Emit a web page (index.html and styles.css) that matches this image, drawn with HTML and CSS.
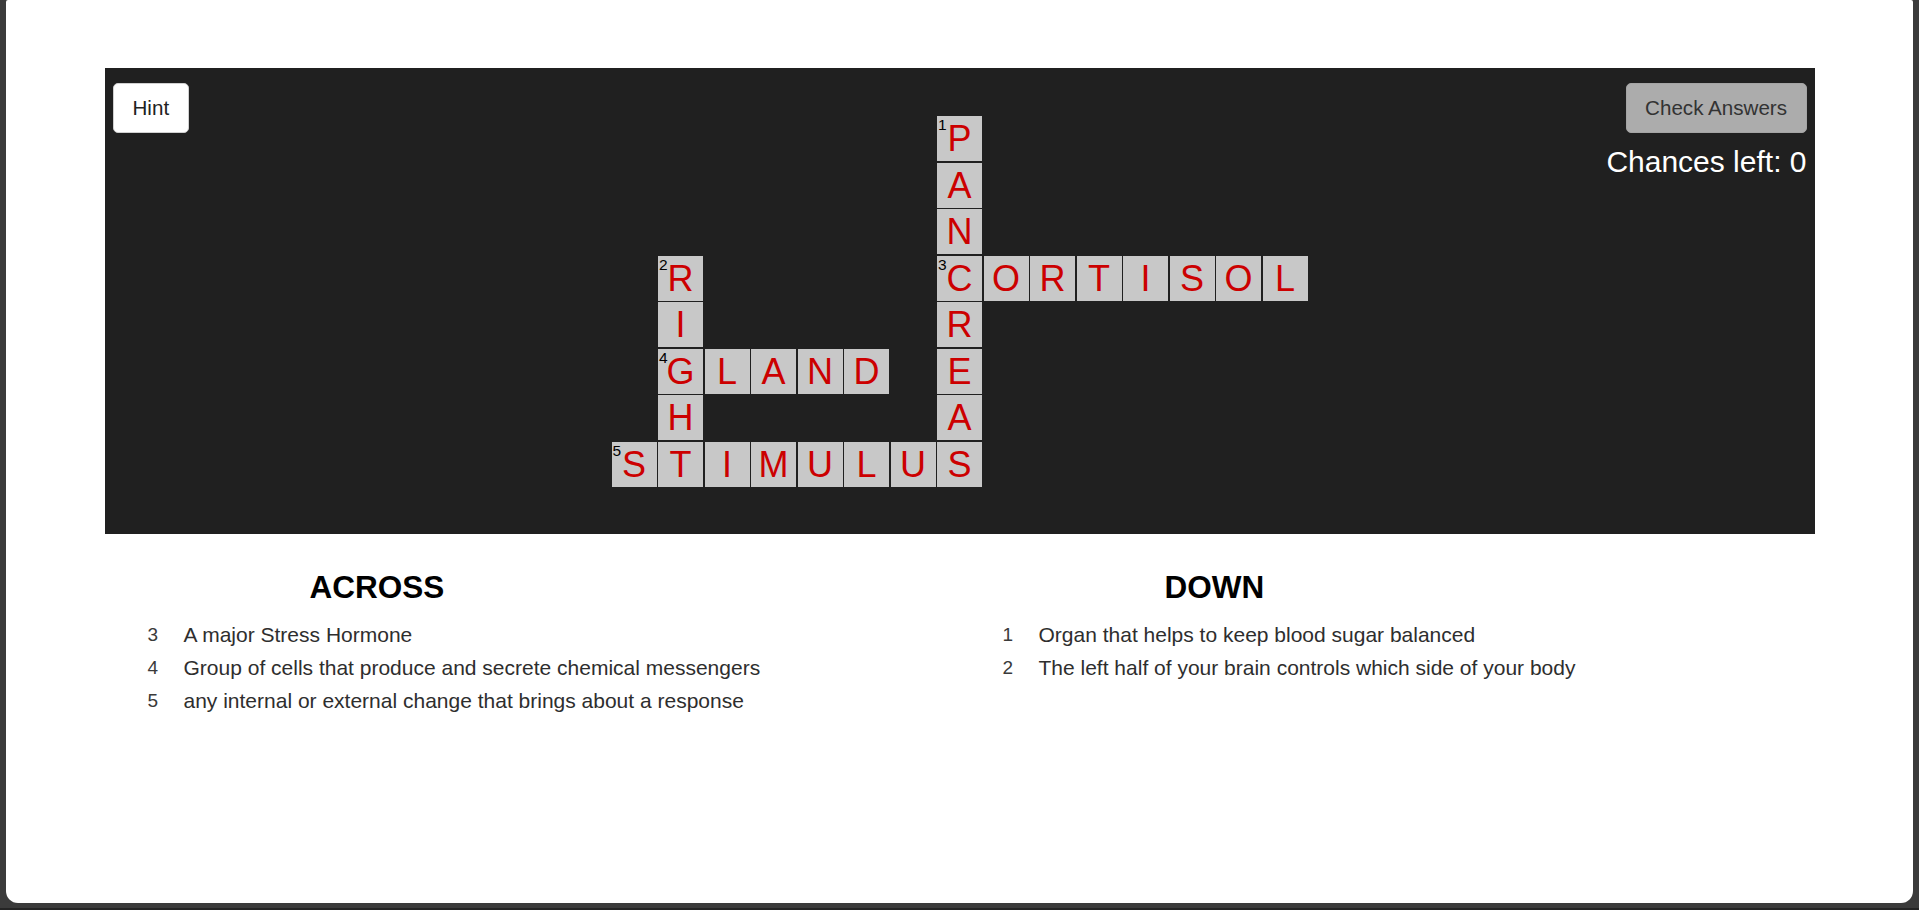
FILE: index.html
```html
<!DOCTYPE html>
<html lang="en">
<head>
<meta charset="utf-8">
<title>Crossword</title>
<link rel="stylesheet" href="styles.css">
</head>
<body>
<div class="frame">
  <main class="window">
    <section class="board">
      <button class="btn btn-hint" type="button">Hint</button>
      <div class="status">
        <button class="btn btn-check" type="button">Check Answers</button>
        <div class="chances">Chances left: 0</div>
      </div>
      <div class="grid">
        <!-- PANCREAS (down, col 8) -->
        <div class="cell" style="grid-area:1/8"><span class="num">1</span>P</div>
        <div class="cell" style="grid-area:2/8">A</div>
        <div class="cell" style="grid-area:3/8">N</div>
        <div class="cell" style="grid-area:4/8"><span class="num">3</span>C</div>
        <div class="cell" style="grid-area:5/8">R</div>
        <div class="cell" style="grid-area:6/8">E</div>
        <div class="cell" style="grid-area:7/8">A</div>
        <div class="cell" style="grid-area:8/8">S</div>
        <!-- CORTISOL (across, row 4) -->
        <div class="cell" style="grid-area:4/9">O</div>
        <div class="cell" style="grid-area:4/10">R</div>
        <div class="cell" style="grid-area:4/11">T</div>
        <div class="cell" style="grid-area:4/12">I</div>
        <div class="cell" style="grid-area:4/13">S</div>
        <div class="cell" style="grid-area:4/14">O</div>
        <div class="cell" style="grid-area:4/15">L</div>
        <!-- RIGHT (down, col 2) -->
        <div class="cell" style="grid-area:4/2"><span class="num">2</span>R</div>
        <div class="cell" style="grid-area:5/2">I</div>
        <div class="cell" style="grid-area:6/2"><span class="num">4</span>G</div>
        <div class="cell" style="grid-area:7/2">H</div>
        <div class="cell" style="grid-area:8/2">T</div>
        <!-- GLAND (across, row 6) -->
        <div class="cell" style="grid-area:6/3">L</div>
        <div class="cell" style="grid-area:6/4">A</div>
        <div class="cell" style="grid-area:6/5">N</div>
        <div class="cell" style="grid-area:6/6">D</div>
        <!-- STIMULUS (across, row 8) -->
        <div class="cell" style="grid-area:8/1"><span class="num">5</span>S</div>
        <div class="cell" style="grid-area:8/3">I</div>
        <div class="cell" style="grid-area:8/4">M</div>
        <div class="cell" style="grid-area:8/5">U</div>
        <div class="cell" style="grid-area:8/6">L</div>
        <div class="cell" style="grid-area:8/7">U</div>
      </div>
    </section>

    <section class="clues">
      <div class="clue-col">
        <h2 class="clue-title">ACROSS</h2>
        <ul class="clue-list">
          <li class="clue"><span class="clue-num">3</span><span class="clue-text">A major Stress Hormone</span></li>
          <li class="clue"><span class="clue-num">4</span><span class="clue-text">Group of cells that produce and secrete chemical messengers</span></li>
          <li class="clue"><span class="clue-num">5</span><span class="clue-text">any internal or external change that brings about a response</span></li>
        </ul>
      </div>
      <div class="clue-col">
        <h2 class="clue-title">DOWN</h2>
        <ul class="clue-list">
          <li class="clue"><span class="clue-num">1</span><span class="clue-text">Organ that helps to keep blood sugar balanced</span></li>
          <li class="clue"><span class="clue-num">2</span><span class="clue-text">The left half of your brain controls which side of your body</span></li>
        </ul>
      </div>
    </section>
  </main>
</div>
</body>
</html>
```

FILE: styles.css
```css
* {
  box-sizing: border-box;
}

html, body {
  margin: 0;
  padding: 0;
  background: #3b3b3b;
}

body {
  font-family: "Liberation Sans", Arial, sans-serif;
  font-size: 20px;
  color: #333;
}

.frame {
  height: 910px;
  padding: 0 6px 5px 6px;
  border-bottom: 2px solid #242424;
  overflow: hidden;
}

.window {
  height: 903px;
  background: #ffffff;
  border-radius: 2px 2px 12px 12px;
  padding-top: 68px;
}

/* ---------- board ---------- */
.board {
  position: relative;
  width: 1710px;
  margin: 0 auto;
  background: #202020;
  padding: 48px 0 47px;
  display: flex;
  justify-content: center;
}

.btn {
  font-family: "Liberation Sans", Arial, sans-serif;
  font-size: 20.6px;
  line-height: 24px;
  padding: 12px 19px;
  border-radius: 5px;
  cursor: pointer;
}

.btn-hint {
  position: absolute;
  top: 15px;
  left: 8px;
  background: #ffffff;
  color: #222;
  border: 1px solid #d0d0d0;
}

.status {
  position: absolute;
  top: 15px;
  right: 8px;
  display: flex;
  flex-direction: column;
  align-items: flex-end;
}

.btn-check {
  background: #acacac;
  color: #333;
  border: 1px solid #a4a4a4;
  padding-left: 18.5px;
  padding-right: 18.5px;
}

.chances {
  margin-top: 12px;
  color: #ffffff;
  font-size: 30px;
  line-height: 34px;
}

.grid {
  display: grid;
  grid-template-columns: repeat(15, 45px);
  grid-template-rows: repeat(8, 45px);
  gap: 1.5px;
}

.cell {
  position: relative;
  background: #c8c8c8;
  color: #cc0000;
  font-family: "Liberation Sans", Arial, sans-serif;
  font-size: 36px;
  line-height: 45px;
  text-align: center;
}

.num {
  position: absolute;
  top: 0;
  left: 1px;
  font-size: 15.5px;
  line-height: 17px;
  color: #000;
}

/* ---------- clues ---------- */
.clues {
  width: 1710px;
  margin: 0 auto;
  display: flex;
}

.clue-col {
  flex: 1;
}

.clue-title {
  margin: 36px 0 13px;
  padding-left: 205px;
  font-size: 31.5px;
  font-weight: bold;
  color: #000;
  line-height: 35px;
}

.clue-list {
  list-style: none;
  margin: 0;
  padding: 0 0 0 43px;
}

.clue {
  display: flex;
  line-height: 33px;
  font-size: 21px;
  color: #333;
}

.clue-num {
  width: 36px;
  flex: none;
  font-size: 19px;
  color: #3a3a3a;
}

.clue-text {
  color: #2e2e2e;
}
```
